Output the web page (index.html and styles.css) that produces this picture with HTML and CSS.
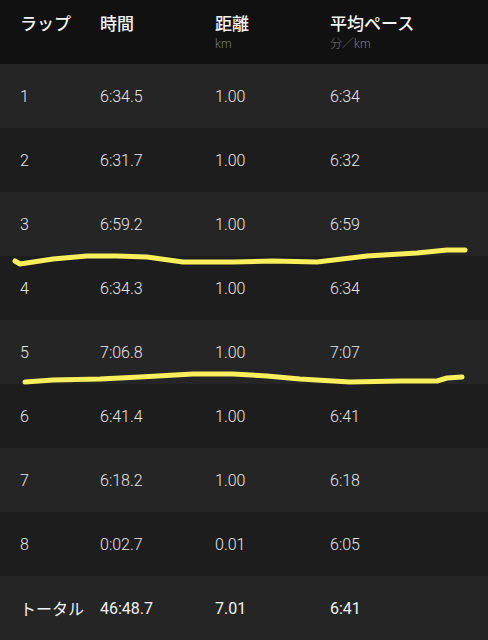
FILE: index.html
```html
<!DOCTYPE html>
<html lang="ja">
<head>
<meta charset="UTF-8" />
<title>ラップ</title>
<link rel="stylesheet" href="styles.css">
</head>
<body>
  <div class="laps">
    <div class="row head">
      <div class="cell">ラップ</div>
      <div class="cell">時間</div>
      <div class="cell">距離<span class="unit">km</span></div>
      <div class="cell">平均ペース<span class="unit">分／km</span></div>
    </div>

    <div class="row light"><div class="cell">1</div><div class="cell">6:34.5</div><div class="cell">1.00</div><div class="cell">6:34</div></div>
    <div class="row dark"><div class="cell">2</div><div class="cell">6:31.7</div><div class="cell">1.00</div><div class="cell">6:32</div></div>
    <div class="row light"><div class="cell">3</div><div class="cell">6:59.2</div><div class="cell">1.00</div><div class="cell">6:59</div></div>
    <div class="row dark"><div class="cell">4</div><div class="cell">6:34.3</div><div class="cell">1.00</div><div class="cell">6:34</div></div>
    <div class="row light"><div class="cell">5</div><div class="cell">7:06.8</div><div class="cell">1.00</div><div class="cell">7:07</div></div>
    <div class="row dark"><div class="cell">6</div><div class="cell">6:41.4</div><div class="cell">1.00</div><div class="cell">6:41</div></div>
    <div class="row light"><div class="cell">7</div><div class="cell">6:18.2</div><div class="cell">1.00</div><div class="cell">6:18</div></div>
    <div class="row dark"><div class="cell">8</div><div class="cell">0:02.7</div><div class="cell">0.01</div><div class="cell">6:05</div></div>

    <div class="row light total">
      <div class="cell">トータル</div>
      <div class="cell">46:48.7</div>
      <div class="cell">7.01</div>
      <div class="cell">6:41</div>
    </div>

    <!-- hand-drawn marker lines -->
    <svg class="marks" width="488" height="640" viewBox="0 0 488 640">
      <path d="M15 261 L20 264 L53 259 L87 256 L117 256 L147 257 L183 262 L233 262 L273 261 L317 262 L367 256 L417 253 L447 250 L465 250" />
      <path d="M25 382 L53 380 L100 379 L140 377 L193 374 L233 374 L267 376 L300 379 L350 382 L400 381 L437 381 L447 378 L462 377" />
    </svg>
  </div>
</body>
</html>
```

FILE: styles.css
```css
body {
  margin: 0;
  background-color: #1d1d1d;
  font-family: Roboto, "Noto Sans CJK JP", sans-serif;
  color: #e6e6e6;
}

.laps {
  position: relative;
  width: 488px;
  height: 640px;
  overflow: hidden;
}

.row {
  display: grid;
  grid-template-columns: 80px 115px 115px 1fr;
  align-items: center;
  height: 64px;
  padding-left: 20px;
  font-size: 16px;
  font-weight: 300;
}

.light {
  background-color: #252525;
}

.dark {
  background-color: #1d1d1d;
}

.head {
  align-items: start;
  background-color: #111111;
  font-family: "Noto Sans CJK JP", sans-serif;
  font-size: 17px;
  font-weight: 500;
  color: #f4f4f4;
  padding-top: 10px;
  box-sizing: border-box;
}

.unit {
  display: block;
  font-family: Roboto, "Noto Sans CJK JP", sans-serif;
  font-size: 12px;
  font-weight: 300;
  color: #7a7a7a;
  line-height: 14px;
  margin-top: 2px;
}

.total {
  font-weight: 400;
  color: #f2f2f2;
}

.total .cell:first-child {
  font-family: "Noto Sans CJK JP", sans-serif;
}

.marks {
  position: absolute;
  top: 0;
  left: 0;
  pointer-events: none;
}

.marks path {
  fill: none;
  stroke: #f9ef5c;
  stroke-width: 5;
  stroke-linecap: round;
  stroke-linejoin: round;
}
```
